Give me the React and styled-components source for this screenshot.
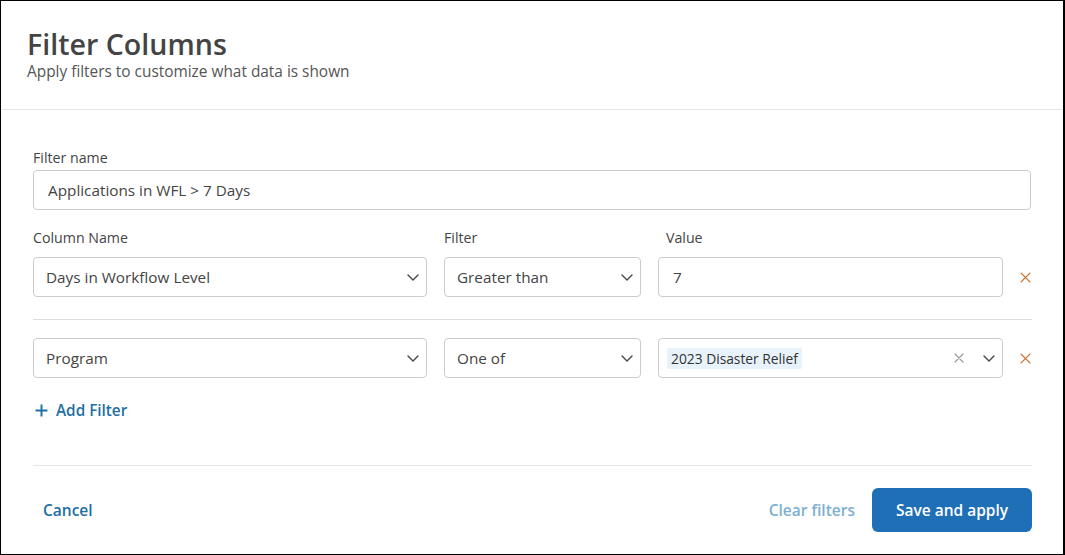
import React from 'react';
import styled, { createGlobalStyle } from 'styled-components';

const GlobalStyle = createGlobalStyle`
  * { box-sizing: border-box; }
  html, body { margin: 0; padding: 0; background: #fff; }
  body { font-family: "Open Sans", "Noto Sans", sans-serif; color: #333; }
`;

const Frame = styled.div`
  width: 1065px;
  height: 555px;
  border: 1px solid #000;
  border-right-width: 2px;
  display: flex;
  flex-direction: column;
  overflow: hidden;
`;

const Header = styled.header`
  padding: 25px 26px 0;
  height: 109px;
  border-bottom: 1px solid #e6e6e6;
`;

const Title = styled.h1`
  margin: 0;
  font-size: 28.6px;
  font-weight: 600;
  line-height: 36px;
  color: #444;
`;

const Subtitle = styled.p`
  margin: 0;
  font-size: 15.4px;
  line-height: 20px;
  color: #555;
`;

const Body = styled.main`
  padding: 38px 32px 0;
  display: flex;
  flex-direction: column;
`;

const Label = styled.label`
  display: block;
  font-size: 14.2px;
  line-height: 20px;
  color: #444;
  margin-bottom: 2px;
  padding-left: ${(p) => p.$indent || 0}px;
`;

const Box = styled.div`
  height: 40px;
  border: 1px solid #ccc;
  border-radius: 4px;
  display: flex;
  align-items: center;
  padding: 0 ${(p) => p.$right ?? 12}px 0 ${(p) => p.$left ?? 12}px;
  font-size: 15.3px;
  color: #444;
  background: #fff;
`;

const Text = styled.span`
  flex: 1;
`;

const Grid = styled.div`
  display: grid;
  grid-template-columns: 394px 197px 345px 1fr;
  column-gap: 17px;
  row-gap: ${(p) => p.$rowGap || 0}px;
  align-items: center;
`;

const FirstBlock = styled.div`
  margin-bottom: 18px;
`;

const Divider = styled.hr`
  border: 0;
  border-top: 1px solid #ddd;
  margin: ${(p) => p.$m || '0'};
  width: 999px;
`;

const Remove = styled.button`
  border: 0;
  background: none;
  padding: 0;
  justify-self: end;
  display: flex;
  cursor: pointer;
`;

const Chip = styled.span`
  background: #e8f2fb;
  border-radius: 2px;
  padding: 0 4px;
  font-size: 13.8px;
  line-height: 21px;
  color: #333;
`;

const ChipArea = styled.div`
  flex: 1;
  display: flex;
`;

const Icons = styled.div`
  display: flex;
  align-items: center;
  gap: 18px;
`;

const AddFilter = styled.button`
  margin-top: 22px;
  display: flex;
  align-items: center;
  gap: 8px;
  border: 0;
  background: none;
  padding: 0 0 0 2px;
  font-family: inherit;
  font-size: 15.3px;
  font-weight: 600;
  color: #1d6fa5;
  cursor: pointer;
  align-self: flex-start;
`;

const Footer = styled.footer`
  margin: 45px 32px 0;
  border-top: 1px solid #e6e6e6;
  width: 999px;
  padding-top: 22px;
  display: flex;
  align-items: center;
`;

const LinkButton = styled.button`
  border: 0;
  background: none;
  font-family: inherit;
  font-size: 15.5px;
  font-weight: 600;
  color: ${(p) => (p.$muted ? '#7db0d0' : '#1d6fa5')};
  padding: 0 ${(p) => p.$px || 0}px;
  cursor: pointer;
`;

const Spacer = styled.div`
  flex: 1;
`;

const Primary = styled.button`
  width: 160px;
  height: 44px;
  margin-left: 17px;
  border: 0;
  border-radius: 6px;
  background: #1e6fb6;
  color: #fff;
  font-family: inherit;
  font-size: 15.5px;
  font-weight: 600;
  cursor: pointer;
`;

const Chevron = ({ color = '#444' }) => (
  <svg width="14" height="14" viewBox="0 0 14 14" fill="none">
    <path d="M2 5l5 5 5-5" stroke={color} strokeWidth="1.4" strokeLinecap="round" strokeLinejoin="round" />
  </svg>
);

const Cross = ({ color, size = 11 }) => (
  <svg width={size} height={size} viewBox="0 0 10 10" fill="none">
    <path d="M1 1l8 8M9 1L1 9" stroke={color} strokeWidth="1.2" strokeLinecap="round" />
  </svg>
);

const Plus = () => (
  <svg width="13" height="13" viewBox="0 0 12 12" fill="none">
    <path d="M6 0.5v11M0.5 6h11" stroke="#1d6fa5" strokeWidth="1.8" />
  </svg>
);

const Select = ({ value }) => (
  <Box $right={6}>
    <Text>{value}</Text>
    <Chevron />
  </Box>
);

export default function App() {
  return (
    <>
      <GlobalStyle />
      <Frame>
        <Header>
          <Title>Filter Columns</Title>
          <Subtitle>Apply filters to customize what data is shown</Subtitle>
        </Header>
        <Body>
          <FirstBlock>
            <Label>Filter name</Label>
            <Box $left={14}>Applications in WFL &gt; 7 Days</Box>
          </FirstBlock>
          <Grid $rowGap={7}>
            <Label>Column Name</Label>
            <Label>Filter</Label>
            <Label $indent={8}>Value</Label>
            <span />
            <Select value="Days in Workflow Level" />
            <Select value="Greater than" />
            <Box $left={14}>7</Box>
            <Remove aria-label="Remove filter">
              <Cross color="#c9702f" />
            </Remove>
          </Grid>
          <Divider $m="22px 0 18px" />
          <Grid>
            <Select value="Program" />
            <Select value="One of" />
            <Box $left={8} $right={6}>
              <ChipArea>
                <Chip>2023 Disaster Relief</Chip>
              </ChipArea>
              <Icons>
                <Cross color="#999" size={10} />
                <Chevron />
              </Icons>
            </Box>
            <Remove aria-label="Remove filter">
              <Cross color="#c9702f" />
            </Remove>
          </Grid>
          <AddFilter>
            <Plus />
            Add Filter
          </AddFilter>
        </Body>
        <Footer>
          <LinkButton $px={10}>Cancel</LinkButton>
          <Spacer />
          <LinkButton $muted>Clear filters</LinkButton>
          <Primary>Save and apply</Primary>
        </Footer>
      </Frame>
    </>
  );
}
